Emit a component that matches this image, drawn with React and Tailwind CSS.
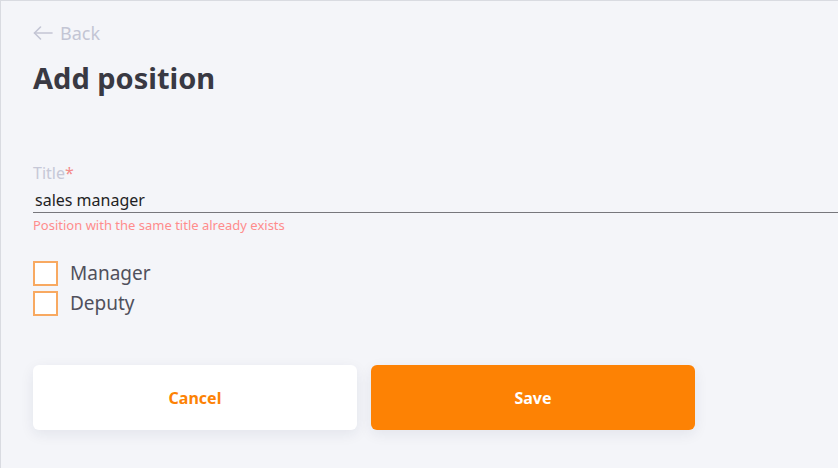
import { useState } from 'react';

function Checkbox({ label }) {
    const [checked, setChecked] = useState(false);
    return (
        <label className="flex items-center h-[25px] cursor-pointer">
            <span
                onClick={() => setChecked(!checked)}
                className="w-[25px] h-[25px] shrink-0 bg-white border-2 border-[#f8a961]"
            />
            <span className="ml-[12px] text-[19px] text-[#50505c] leading-none">{label}</span>
        </label>
    );
}

export default function App() {
    const [title, setTitle] = useState('sales manager');

    return (
        <div
            className="w-[838px] h-[468px] bg-[#f4f5f9] border-t border-l border-[#d9dbe1] overflow-hidden"
            style={{ fontFamily: '"Segoe UI", "Noto Sans", "Open Sans", sans-serif' }}
        >
            <div className="pl-[32px] pt-[20px]">
                <button className="flex items-center gap-[7px] text-[#c3c5d4] text-[18px] leading-[24px]">
                    <svg width="20" height="14" viewBox="0 0 20 14" fill="none" stroke="#c3c5d4" strokeWidth="1.6" strokeLinecap="round" strokeLinejoin="round">
                        <path d="M19 7H1.5" />
                        <path d="M7.5 1L1.5 7l6 6" />
                    </svg>
                    Back
                </button>
                <h1 className="mt-[16px] text-[29px] font-bold text-[#393943] leading-[34px]">Add position</h1>

                <div className="mt-[68px]">
                    <div className="text-[16px] text-[#c6c8d7] leading-[20px]">
                        Title<span className="text-[#f38a8a]">*</span>
                    </div>
                    <input
                        value={title}
                        onChange={e => setTitle(e.target.value)}
                        className="block w-full mt-[7px] pl-[2px] pb-[2px] bg-transparent text-[16px] text-[#1f1f24] leading-[20px] border-b border-[#77777c] outline-none"
                    />
                    <div className="mt-[4px] text-[13px] text-[#ff8c8c] leading-[17px]">
                        Position with the same title already exists
                    </div>
                </div>

                <div className="mt-[27px] flex flex-col gap-[5px]">
                    <Checkbox label="Manager" />
                    <Checkbox label="Deputy" />
                </div>

                <div className="mt-[49px] flex gap-[14px]">
                    <button className="w-[324px] h-[65px] rounded-[6px] bg-white text-[#fd8204] text-[16px] font-bold shadow-[0_4px_14px_rgba(30,40,80,0.08)]">
                        Cancel
                    </button>
                    <button className="w-[324px] h-[65px] rounded-[6px] bg-[#fd8204] text-white text-[16px] font-bold shadow-[0_4px_14px_rgba(30,40,80,0.08)]">
                        Save
                    </button>
                </div>
            </div>
        </div>
    );
}
